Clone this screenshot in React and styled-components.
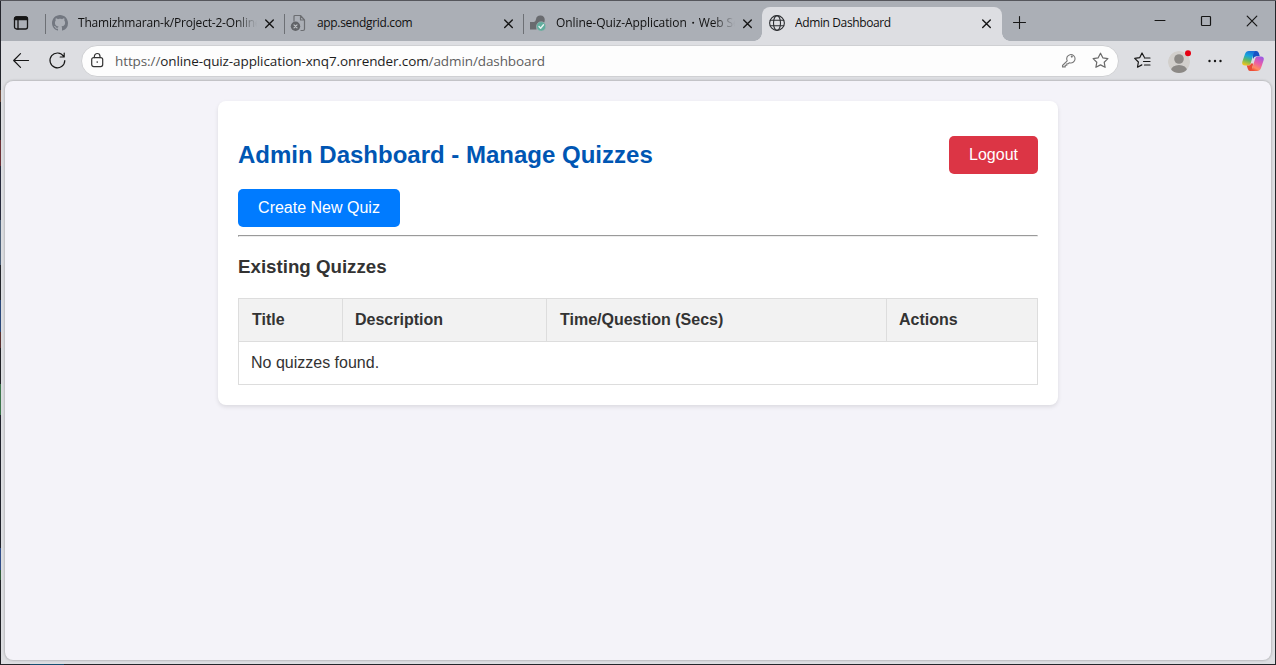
import React from 'react';
import styled, { createGlobalStyle, css } from 'styled-components';

const GlobalStyle = createGlobalStyle`
  *, *::before, *::after { box-sizing: border-box; }
  body { margin: 0; overflow: hidden; background: #24262b; }
`;

const uiFont = css`font-family: 'Open Sans', 'Noto Sans', sans-serif;`;

const Desktop = styled.div`
  width: 1276px;
  height: 665px;
  padding: 1px;
  background:
    linear-gradient(#55565c, #55565c) 0 0 / 100% 1px no-repeat,
    linear-gradient(90deg, transparent 30px, #174d70 30px 64px, transparent 64px) 0 100% / 100% 1px no-repeat,
    linear-gradient(#23252c 90px, #6d4a3c 90px 102px, #23252c 102px 140px, #6c3037 140px 166px, #26293c 166px 220px,
      #4c5f78 220px 265px, #23252c 265px 300px, #29477a 300px 332px, #5a3030 332px 348px, #202126 348px 384px,
      #3c744c 384px 415px, #20222c 415px 548px, #304d88 548px 570px, #2f5a39 570px 580px, #202126 580px) 0 0 / 1px 100% no-repeat,
    #24262b;
`;

const Window = styled.div`
  display: flex;
  flex-direction: column;
  height: 663px;
  background: #dddee2;
`;

const TabStrip = styled.div`
  display: flex;
  height: 40px;
  background: #abafb6;
`;

const Workspaces = styled.div`
  display: flex;
  width: 44px;
  padding: 14px 0 0 12px;
`;

const Tab = styled.div`
  position: relative;
  display: flex;
  align-items: center;
  width: ${(p) => p.$width}px;
  height: ${(p) => (p.$active ? 34 : 32)}px;
  margin-top: 6px;
  padding: 0 ${(p) => (p.$active ? 11 : 10)}px 0 7px;
  ${(p) => p.$active ? css`
    padding-bottom: 2px;
    background: #dddee2;
    border-radius: 8px 8px 0 0;
    &::before, &::after {
      content: '';
      position: absolute;
      bottom: 0;
      width: 8px;
      height: 8px;
    }
    &::before { left: -8px; background: radial-gradient(circle at 0 0, transparent 7.5px, #dddee2 8px); }
    &::after { right: -8px; background: radial-gradient(circle at 100% 0, transparent 7.5px, #dddee2 8px); }
  ` : css`
    &::before {
      content: '';
      position: absolute;
      left: 0;
      top: 7px;
      width: 1px;
      height: 20px;
      background: #6d7075;
    }
  `}
`;

const TabLabel = styled.span`
  ${uiFont}
  flex: 1;
  min-width: 0;
  margin: 0 8px 0 10px;
  overflow: hidden;
  white-space: nowrap;
  font-size: 12px;
  line-height: 18px;
  letter-spacing: ${(p) => p.$spacing || 0}px;
  color: #111;
  ${(p) => p.$fade && css`mask-image: linear-gradient(90deg, #000 calc(100% - 22px), transparent);`}
`;

const Icon = styled.svg`
  display: block;
  flex: none;
  width: ${(p) => p.$size || 16}px;
  height: ${(p) => p.$size || 16}px;
  fill: none;
  stroke: ${(p) => p.$color || '#161616'};
  stroke-width: ${(p) => p.$weight || 1.2};
  stroke-linecap: round;
  stroke-linejoin: round;
  overflow: visible;
`;

const NewTab = styled.div`
  padding: 15px 0 0 11px;
`;

const WindowButtons = styled.div`
  display: flex;
  gap: 34px;
  margin-left: auto;
  padding: 14px 17px 0 0;
`;

const Toolbar = styled.div`
  display: flex;
  align-items: center;
  height: 39px;
  padding: 0 11px 0 12px;
`;

const Navigation = styled.div`
  display: flex;
  gap: 19px;
  width: 68px;
`;

const AddressBar = styled.div`
  ${uiFont}
  display: flex;
  align-items: center;
  width: 1038px;
  height: 32px;
  padding: 0 9px;
  border: 1px solid #cfd0d3;
  border-radius: 16px;
  background: #fdfdfd;
`;

const Url = styled.span`
  flex: 1;
  margin-left: 11px;
  white-space: nowrap;
  font-size: 13.5px;
  line-height: 20px;
  letter-spacing: ${(p) => p.$spacing}px;
  color: #5e5e5e;
`;

const Host = styled.span`color: #1d1d1d;`;

const AddressActions = styled.div`
  display: flex;
  gap: 15px;
`;

const Tools = styled.div`
  display: flex;
  align-items: center;
  margin-left: auto;
`;

const Avatar = styled.div`margin: 2px 18px 0 17px;`;
const Copilot = styled.div`margin-left: 20px;`;

const Page = styled.main`
  width: 1266px;
  height: 579px;
  margin: 1px 0 0 4px;
  padding-top: 20px;
  border-radius: 8px;
  background: #f4f3f9;
  box-shadow: 0 0 2px 1px rgba(0, 0, 0, 0.16);
  font-family: 'Liberation Sans', Arial, sans-serif;
  font-size: 16px;
  color: #333;
`;

const Card = styled.section`
  width: 840px;
  height: 304px;
  margin: 0 auto;
  padding: 35px 20px 20px;
  border-radius: 8px;
  background: #fff;
  box-shadow: 0 2px 4px rgba(0, 0, 0, 0.1);
`;

const CardHeader = styled.header`
  display: flex;
  align-items: center;
  justify-content: space-between;
  margin-bottom: 15px;
`;

const Title = styled.h2`
  margin: 0;
  font-size: 24px;
  line-height: 28px;
  color: #0056b3;
`;

const Button = styled.button`
  display: block;
  width: ${(p) => p.$width}px;
  height: 38px;
  padding: 0;
  border: 0;
  border-radius: 5px;
  background: ${(p) => (p.$danger ? '#dc3545' : '#007bff')};
  font: 16px/18px 'Liberation Sans', Arial, sans-serif;
  color: #fff;
`;

const Divider = styled.hr`
  height: 2px;
  margin: 8px 0 18px;
  border: 1px solid;
  border-color: #9a9a9a #eee #eee #9a9a9a;
`;

const Subtitle = styled.h3`
  margin: 0 0 20px;
  font-size: 18.72px;
  line-height: 23px;
`;

const Table = styled.table`
  width: 800px;
  border-collapse: collapse;
  table-layout: fixed;
`;

const cell = css`
  height: 43px;
  padding: 12px;
  border: 1px solid #ddd;
  line-height: 18px;
  text-align: left;
`;

const HeadCell = styled.th`
  ${cell}
  width: ${(p) => p.$width}px;
  padding-left: ${(p) => (p.$inset ? 13 : 12)}px;
  background: #f2f2f2;
`;

const BodyCell = styled.td`${cell}`;

const CloseIcon = () => (
  <Icon $size={9} viewBox="0 0 9 9" $weight="1.4"><path d="M.7 1l7.6 7.6M8.3 1L.7 8.6" /></Icon>
);

const GithubIcon = () => (
  <Icon viewBox="0 0 16 16">
    <path fill="#727780" stroke="none" d="M8 0C3.58 0 0 3.58 0 8c0 3.54 2.29 6.53 5.47 7.59.4.07.55-.17.55-.38 0-.19-.01-.82-.01-1.49-2.01.37-2.53-.49-2.69-.94-.09-.23-.48-.94-.82-1.13-.28-.15-.68-.52-.01-.53.63-.01 1.08.58 1.23.82.72 1.21 1.87.87 2.33.66.07-.52.28-.87.51-1.07-1.78-.2-3.64-.89-3.64-3.95 0-.87.31-1.59.82-2.15-.08-.2-.36-1.02.08-2.12 0 0 .67-.21 2.2.82.64-.18 1.32-.27 2-.27s1.36.09 2 .27c1.53-1.04 2.2-.82 2.2-.82.44 1.1.16 1.92.08 2.12.51.56.82 1.27.82 2.15 0 3.07-1.87 3.75-3.65 3.95.29.25.54.73.54 1.48 0 1.07-.01 1.93-.01 2.2 0 .21.15.46.55.38A8.01 8.01 0 0 0 16 8c0-4.42-3.58-8-8-8z" />
  </Icon>
);

const BrokenPageIcon = () => (
  <Icon viewBox="0 0 16 16" $color="#6c6e72">
    <path d="M3 6V1.5Q3 .5 4 .5h5.5L13.5 5v9q0 1.5-1.5 1.5H10M9.5.5V5h4" />
    <circle cx="4.5" cy="11.3" r="4.7" fill="#626468" stroke="none" />
    <path stroke="#c0c3c7" d="M3 9.8l3 3M6 9.8l-3 3" />
  </Icon>
);

const RenderIcon = () => (
  <Icon viewBox="0 0 16 16">
    <path fill="#696b6f" stroke="none" d="M0 7h4Q5.6 6.6 6 4.2A4.4 4.4 0 1 1 11 9.2Q7 9 6.5 11v3.5H0z" />
    <circle cx="11.2" cy="11.4" r="4.7" fill="#60ad9d" stroke="#abafb6" strokeWidth=".6" />
    <path stroke="#e9f3f1" strokeWidth="1.4" d="M9 11.6l1.6 1.6 2.9-3.5" />
  </Icon>
);

const GlobeIcon = () => (
  <Icon viewBox="0 0 16 16" $color="#2d2f32" $weight="1.1">
    <circle cx="8" cy="8" r="7.4" />
    <ellipse cx="8" cy="8" rx="3.5" ry="7.4" />
    <path d="M1.3 5.3h13.4M1.3 10.7h13.4" />
  </Icon>
);

const CopilotIcon = () => (
  <Icon $size={22} viewBox="0 0 22 22">
    <defs>
      <linearGradient id="cool" x1=".6" y1="0" x2=".3" y2="1">
        <stop offset="0" stopColor="#1b70d8" /><stop offset=".35" stopColor="#16a6dc" />
        <stop offset=".65" stopColor="#62b863" /><stop offset="1" stopColor="#efc51c" />
      </linearGradient>
      <linearGradient id="warm" x1=".8" y1="0" x2=".3" y2="1">
        <stop offset="0" stopColor="#9a5ae5" /><stop offset=".45" stopColor="#e85baa" />
        <stop offset=".8" stopColor="#ff8c62" /><stop offset="1" stopColor="#ee4c35" />
      </linearGradient>
    </defs>
    <path fill="#1752c4" stroke="none" d="M11 1h3.2q2 0 2.6 2l1 3.2h-3.5Q12 6.2 11 9z" />
    <path fill="url(#cool)" stroke="none" d="M6.8 1h6.8q-1.4.8-2 2.8L8.6 13.5Q8 15.4 6 15.4H3.2Q-.6 15.4.3 11.8L3 4Q4 1 6.8 1z" />
    <path fill="#e94b34" stroke="none" d="M4.7 15.4H7q1.4 0 2-2l2.2 0-1.5 7.6H8q-1.6 0-2.3-2.5z" />
    <path fill="url(#warm)" stroke="none" d="M15.8 6.4h3q3.7 0 2.9 3.6L19 18q-1 3-4 3H8q1.6-.7 2.2-2.7l3-9.7q.6-2.2 2.6-2.2z" />
  </Icon>
);

const AvatarIcon = () => (
  <Icon $size={22} viewBox="0 0 22 22">
    <defs><clipPath id="face"><circle cx="11" cy="11" r="11" /></clipPath></defs>
    <g clipPath="url(#face)" stroke="none">
      <circle cx="11" cy="11" r="11" fill="#d2cfcc" />
      <circle cx="11" cy="8" r="4.8" fill="#8c8986" />
      <ellipse cx="11" cy="19.3" rx="8" ry="5.2" fill="#8c8986" />
    </g>
    <circle cx="20" cy="2.2" r="3" fill="#e60012" stroke="none" />
  </Icon>
);

function Tabs() {
  return (
    <TabStrip>
      <Workspaces>
        <Icon viewBox="0 0 16 16" $weight="1.3">
          <rect x="1.5" y="2" width="13" height="12" rx="2" />
          <path fill="#161616" d="M1.5 4.6V4q0-2 2-2h9q2 0 2 2v.6z" />
          <path d="M5 5v9" />
        </Icon>
      </Workspaces>
      <Tab $width={239}><GithubIcon /><TabLabel $spacing={-0.2} $fade>Thamizhmaran-k/Project-2-Online</TabLabel><CloseIcon /></Tab>
      <Tab $width={239}><BrokenPageIcon /><TabLabel $spacing={-0.33}>app.sendgrid.com</TabLabel><CloseIcon /></Tab>
      <Tab $width={239}><RenderIcon /><TabLabel $spacing={-0.08} $fade>Online-Quiz-Application・Web Se</TabLabel><CloseIcon /></Tab>
      <Tab $width={240} $active><GlobeIcon /><TabLabel $spacing={-0.38}>Admin Dashboard</TabLabel><CloseIcon /></Tab>
      <NewTab><Icon $size={14} viewBox="0 0 14 14" $weight="1.1"><path d="M.5 6.5h12M6.5 .5v12" /></Icon></NewTab>
      <WindowButtons>
        <Icon $size={12} viewBox="0 0 12 12" $weight="1"><path d="M1 5.5h10" /></Icon>
        <Icon $size={12} viewBox="0 0 12 12"><rect x="1.5" y="1.5" width="9" height="9" rx=".8" /></Icon>
        <Icon $size={12} viewBox="0 0 12 12"><path d="M1.2 1.2l9.6 9.6M10.8 1.2l-9.6 9.6" /></Icon>
      </WindowButtons>
    </TabStrip>
  );
}

function BrowserToolbar() {
  return (
    <Toolbar>
      <Navigation>
        <Icon $size={17} viewBox="0 0 17 17"><path d="M15.5 8.5H.7M7.5 1.7L.7 8.5l6.8 6.8" /></Icon>
        <Icon $size={17} viewBox="0 0 17 17"><path d="M14.7 4.5A7.4 7.4 0 1 0 15.8 8.5M15.2 1v4h-4" /></Icon>
      </Navigation>
      <AddressBar>
        <Icon $size={13} viewBox="0 0 13 13" $color="#343434">
          <rect x=".7" y="3.6" width="11" height="9" rx="2" /><path d="M3.4 3.6V2.3a2.8 2.8 0 0 1 5.6 0v1.3" />
          <circle cx="6.2" cy="8.1" r=".8" fill="#343434" stroke="none" />
        </Icon>
        <Url $spacing={-0.1}>https://<Host>online-quiz-application-xnq7.onrender.com</Host>/admin/dashboard</Url>
        <AddressActions>
          <Icon viewBox="0 0 16 16" $color="#777" $weight="1.1">
            <path d="M6.2 8.8L1.5 13.5v1.4h2.7v-1.6h1.6v-1.6h1.6l1-1A4.2 4.2 0 1 0 6.2 8.8z" /><circle cx="10.8" cy="4.6" r=".5" />
          </Icon>
          <Icon $size={17} viewBox="0 0 17 17" $color="#6b6b6b"><path d="M8.5 1.2l2.3 4.6 5.1.8-3.7 3.6.9 5.1-4.6-2.4-4.6 2.4.9-5.1L1.1 6.6l5.1-.8z" /></Icon>
        </AddressActions>
      </AddressBar>
      <Tools>
        <Icon $size={17} viewBox="0 0 17 17"><path d="M10.2 5L8 1 5.8 5.6l-5.1.8 3.7 3.6-.9 5.2 4.3-2.3M10.5 6H16M9.5 9.5H16M10.5 13H16" /></Icon>
        <Avatar><AvatarIcon /></Avatar>
        <Icon $size={14} viewBox="0 0 14 14"><g fill="#161616" stroke="none"><circle cx="1.5" cy="7" r="1.2" /><circle cx="7" cy="7" r="1.2" /><circle cx="12.5" cy="7" r="1.2" /></g></Icon>
        <Copilot><CopilotIcon /></Copilot>
      </Tools>
    </Toolbar>
  );
}

export default function App() {
  return (
    <>
      <GlobalStyle />
      <Desktop>
        <Window>
          <Tabs />
          <BrowserToolbar />
          <Page>
            <Card>
              <CardHeader>
                <Title>Admin Dashboard - Manage Quizzes</Title>
                <Button $danger $width={89}>Logout</Button>
              </CardHeader>
              <Button $width={162}>Create New Quiz</Button>
              <Divider />
              <Subtitle>Existing Quizzes</Subtitle>
              <Table>
                <thead>
                  <tr>
                    <HeadCell $inset $width={104}>Title</HeadCell>
                    <HeadCell $width={204}>Description</HeadCell>
                    <HeadCell $inset $width={340}>Time/Question (Secs)</HeadCell>
                    <HeadCell $width={151}>Actions</HeadCell>
                  </tr>
                </thead>
                <tbody>
                  <tr><BodyCell colSpan={4}>No quizzes found.</BodyCell></tr>
                </tbody>
              </Table>
            </Card>
          </Page>
        </Window>
      </Desktop>
    </>
  );
}
